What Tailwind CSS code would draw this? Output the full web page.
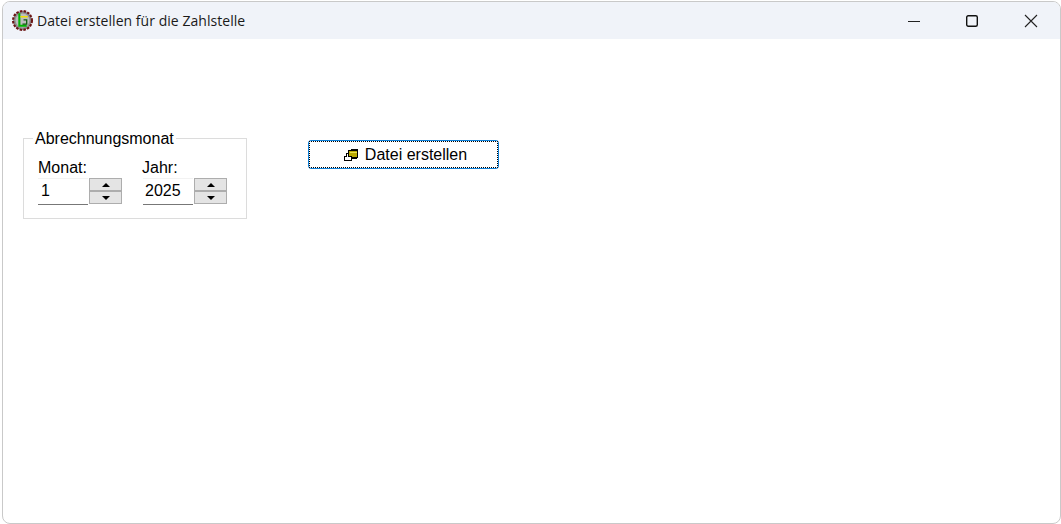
<!DOCTYPE html>
<html lang="de">
<head>
    <meta charset="UTF-8">
    <title>Datei erstellen für die Zahlstelle</title>
    <script src="https://cdn.jsdelivr.net/npm/@tailwindcss/browser@4"></script>
</head>
<body class="bg-white w-[1061px] h-[524px] overflow-hidden font-['Liberation_Sans',sans-serif]">
    <div class="ml-[2px] mt-[1px] w-[1059px] h-[523px] flex flex-col border border-[#c9c9c9] rounded-[8px] overflow-hidden bg-white">
        <!-- title bar -->
        <div class="h-[37px] shrink-0 bg-[#f0f3f9] flex items-center">
            <svg class="ml-[9px] w-[21px] h-[21px]" viewBox="0 0 20 20">
                <circle cx="10" cy="10" r="9" fill="#8e8e8e" stroke="#6b1414" stroke-width="2" stroke-dasharray="2.4 1.2"/>
                <circle cx="10" cy="10" r="6.6" fill="#bdbdbd"/>
                <path d="M7 3v12h7" fill="none" stroke="#00b400" stroke-width="2"/>
                <path d="M8 6.500h7" stroke="#f0e000" stroke-width="1.5"/>
                <path d="M11 9.500h3v4h-4" fill="none" stroke="#0a5a0a" stroke-width="1.2"/>
            </svg>
            <span class="ml-[4px] text-[14px] tracking-[0.04px] text-[#1a1a1a] font-['Open_Sans',sans-serif]">Datei erstellen für die Zahlstelle</span>
            <div class="ml-auto flex items-center">
                <div class="w-[58px] h-[37px] flex items-center justify-center">
                    <svg class="w-[12px] h-[12px]" viewBox="0 0 12 12"><path d="M0 6.500h12" stroke="#222" stroke-width="1"/></svg>
                </div>
                <div class="w-[58px] mr-[1px] h-[37px] flex items-center justify-center">
                    <svg class="w-[12px] h-[12px]" viewBox="0 0 12 12"><rect x="0.7" y="0.7" width="10.6" height="10.6" rx="1.5" fill="none" stroke="#111" stroke-width="1.4"/></svg>
                </div>
                <div class="w-[58px] h-[37px] flex items-center justify-center">
                    <svg class="w-[14px] h-[14px]" viewBox="0 0 14 14"><path d="M1 1l12 12M13 1L1 13" stroke="#222" stroke-width="1.1"/></svg>
                </div>
            </div>
        </div>
        <!-- content -->
        <div class="flex items-start pl-[20px] pt-[91px] text-[16px] text-black">
            <fieldset class="w-[224px] h-[89px] border border-[#dcdcdc] px-[14px] pb-0 m-0">
                <legend class="ml-[-5px] px-[2px] leading-[17px] text-[16px]">Abrechnungsmonat</legend>
                <div class="flex gap-[21px] pt-[12px]">
                    <div class="w-[84px]">
                        <label class="block leading-[17px]">Monat:</label>
                        <div class="flex mt-[2px]">
                            <div class="w-[50px] h-[27px] border-b border-b-[#777] border-t border-t-[#f2f2f2] pl-[3px] leading-[24px]">1</div>
                            <div class="ml-[1px] w-[33px] h-[26px] flex flex-col">
                                <div class="h-[13px] bg-[#e4e4e4] border border-[#adadad] flex items-center justify-center">
                                    <div class="w-0 h-0 border-l-[4px] border-r-[4px] border-b-[4px] border-l-transparent border-r-transparent border-b-black"></div>
                                </div>
                                <div class="h-[13px] bg-[#e4e4e4] border border-[#adadad] flex items-center justify-center">
                                    <div class="w-0 h-0 border-l-[4px] border-r-[4px] border-t-[4px] border-l-transparent border-r-transparent border-t-black"></div>
                                </div>
                            </div>
                        </div>
                    </div>
                    <div class="w-[84px]">
                        <label class="block leading-[17px] -ml-px">Jahr:</label>
                        <div class="flex mt-[2px]">
                            <div class="w-[50px] h-[27px] border-b border-b-[#777] border-t border-t-[#f2f2f2] pl-[2px] leading-[24px]">2025</div>
                            <div class="ml-[1px] w-[33px] h-[26px] flex flex-col">
                                <div class="h-[13px] bg-[#e4e4e4] border border-[#adadad] flex items-center justify-center">
                                    <div class="w-0 h-0 border-l-[4px] border-r-[4px] border-b-[4px] border-l-transparent border-r-transparent border-b-black"></div>
                                </div>
                                <div class="h-[13px] bg-[#e4e4e4] border border-[#adadad] flex items-center justify-center">
                                    <div class="w-0 h-0 border-l-[4px] border-r-[4px] border-t-[4px] border-l-transparent border-r-transparent border-t-black"></div>
                                </div>
                            </div>
                        </div>
                    </div>
                </div>
            </fieldset>
            <button class="ml-[61px] mt-[10px] w-[191px] h-[29px] rounded-[3px] border-[1.5px] border-[#0f80d8] bg-white p-0">
                <span class="flex h-full items-center justify-center gap-[6px] pl-[3px] border border-dotted border-black">
                    <svg class="w-[16px] h-[13px]" viewBox="0 0 16 13" shape-rendering="crispEdges">
                        <path d="M5 2h3v-1h6l1 1v8H5z" fill="#000"/>
                        <path d="M6 3h8v6H6z" fill="#b8a800"/>
                        <path d="M7 4h7v1H7z" fill="#e8dc50"/>
                        <path d="M3 5h2v3h4v2h5v1H9v2H1V8h2z" fill="#000"/>
                        <path d="M4 6h1v3h3v3H2V9h2z" fill="#fff"/>
                    </svg>
                    <span class="text-[16px]">Datei erstellen</span>
                </span>
            </button>
        </div>
    </div>
</body>
</html>
